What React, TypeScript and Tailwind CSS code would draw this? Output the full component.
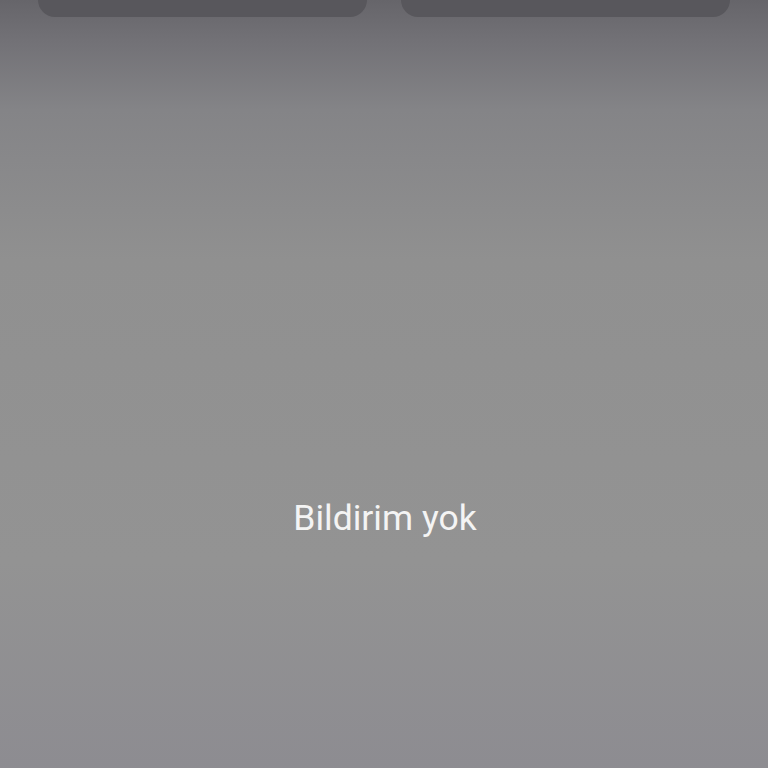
export default function App() {
  return (
    <div
      className="flex h-[768px] w-[768px] flex-col bg-[linear-gradient(to_bottom,#66656a_0px,#727176_40px,#848487_110px,#909090_260px,#939393_560px,#8d8c91_768px)]"
      style={{ fontFamily: "Roboto, 'Noto Sans', sans-serif" }}
    >
      {/* quick settings tiles, cut off at the top */}
      <div className="flex gap-[34px] pl-[38px] pr-[38px]">
        <div className="h-[17px] flex-1 rounded-b-[24px] bg-[#58575c]" />
        <div className="h-[17px] flex-1 rounded-b-[24px] bg-[#58575c]" />
      </div>

      <div className="flex flex-1 justify-center pt-[479px] pl-[2px]">
        <p className="text-[35.5px] leading-[44px] text-[#f4f4f4]">Bildirim yok</p>
      </div>
    </div>
  );
}
